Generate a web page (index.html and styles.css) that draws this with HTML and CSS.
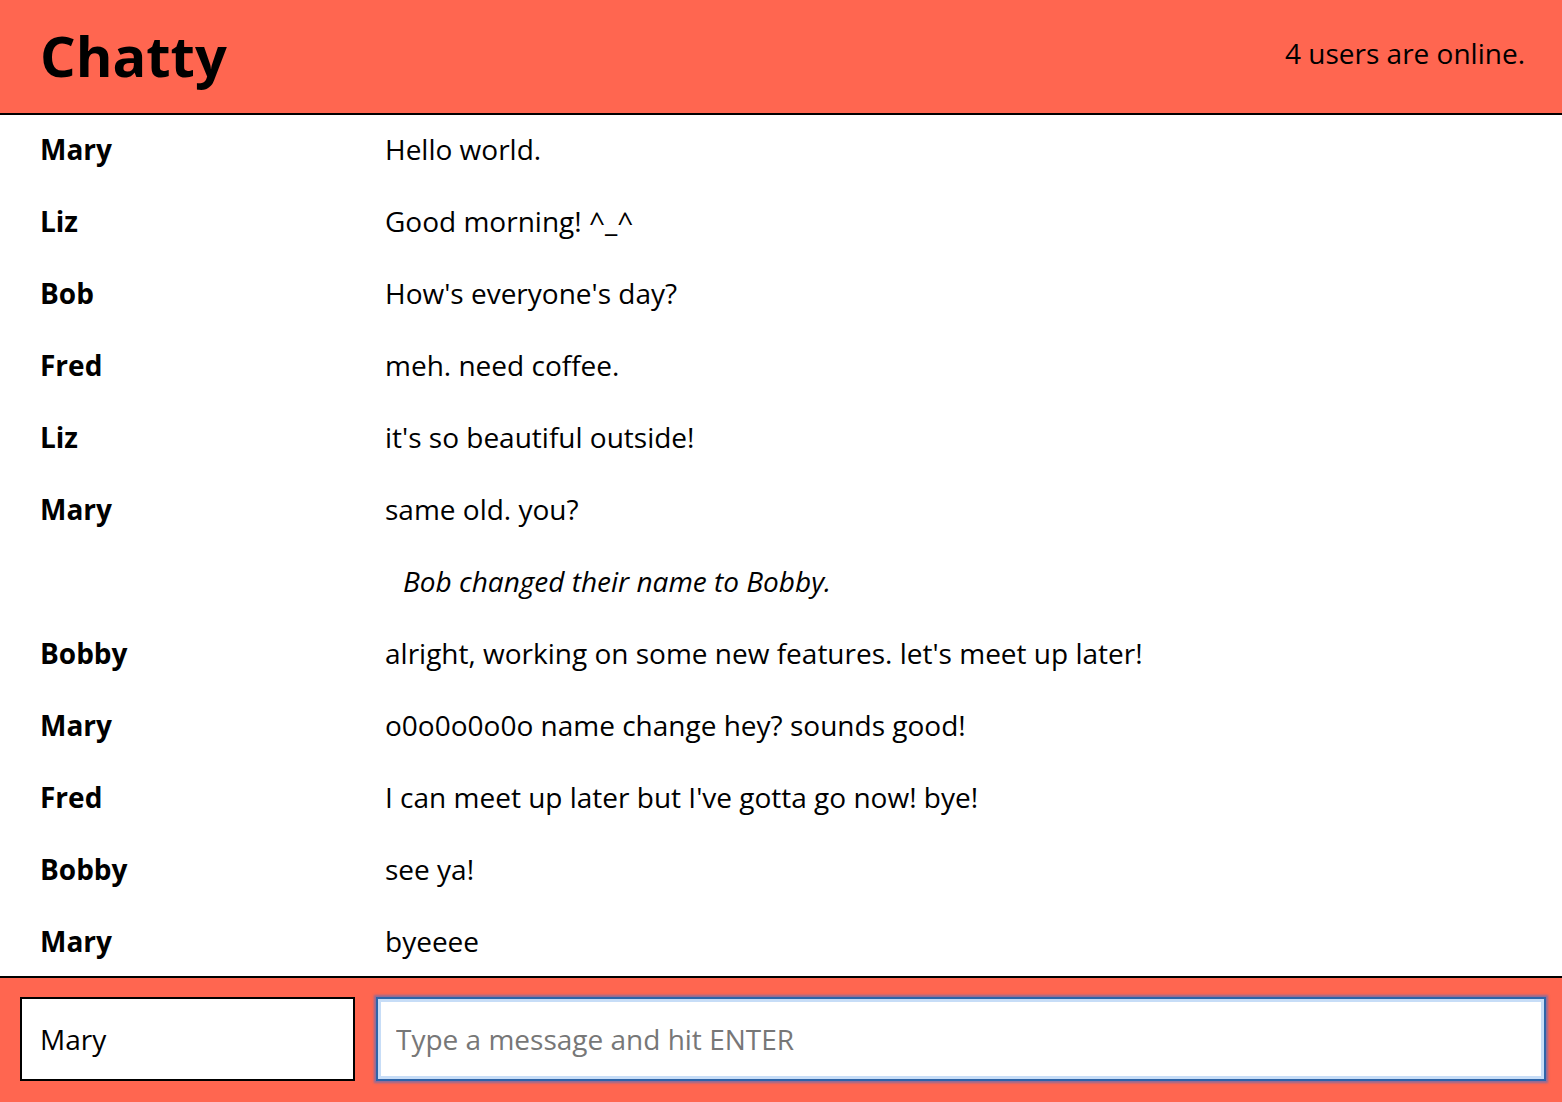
FILE: index.html
```html
<!DOCTYPE html>
<html>
<head>
<meta charset="utf-8">
<title>Chatty</title>
<link rel="stylesheet" href="styles.css">
</head>
<body>
<nav class="navbar">
  <a class="navbar-brand" href="#">Chatty</a>
  <span class="online-count">4 users are online.</span>
</nav>
<main class="messages">
  <div class="message"><span class="message-username">Mary</span><span class="message-content">Hello world.</span></div>
  <div class="message"><span class="message-username">Liz</span><span class="message-content">Good morning! ^_^</span></div>
  <div class="message"><span class="message-username">Bob</span><span class="message-content">How's everyone's day?</span></div>
  <div class="message"><span class="message-username">Fred</span><span class="message-content">meh. need coffee.</span></div>
  <div class="message"><span class="message-username">Liz</span><span class="message-content">it's so beautiful outside!</span></div>
  <div class="message"><span class="message-username">Mary</span><span class="message-content">same old. you?</span></div>
  <div class="message system"><span class="message-username"></span><span class="message-content">Bob changed their name to Bobby.</span></div>
  <div class="message"><span class="message-username">Bobby</span><span class="message-content">alright, working on some new features. let's meet up later!</span></div>
  <div class="message"><span class="message-username">Mary</span><span class="message-content">o0o0o0o0o name change hey? sounds good!</span></div>
  <div class="message"><span class="message-username">Fred</span><span class="message-content">I can meet up later but I've gotta go now! bye!</span></div>
  <div class="message"><span class="message-username">Bobby</span><span class="message-content">see ya!</span></div>
  <div class="message"><span class="message-username">Mary</span><span class="message-content">byeeee</span></div>
</main>
<footer class="chatbar">
  <input class="chatbar-username" value="Mary">
  <input class="chatbar-message focused" placeholder="Type a message and hit ENTER">
</footer>
</body>
</html>
```
FILE: styles.css
```css
* { box-sizing: border-box; }
html, body { height: 100%; }
body {
  margin: 0;
  font-family: "Open Sans", "DejaVu Sans", sans-serif;
  color: #000;
  background: #fff;
  display: flex;
  flex-direction: column;
  overflow: hidden;
}
.navbar {
  flex: 0 0 115px;
  background: #ff6650;
  border-bottom: 2px solid #000;
  display: flex;
  align-items: center;
  justify-content: space-between;
  padding: 0 37px 0 40px;
}
.navbar-brand {
  font-size: 56px;
  font-weight: 700;
  color: #000;
  text-decoration: none;
  line-height: 1;
  margin-bottom: 4px;
}
.online-count {
  font-size: 28px;
  line-height: 1;
  margin-bottom: 8px;
}
.messages {
  flex: 1 1 auto;
  overflow: hidden;
  margin-top: -2px;
}
.message {
  display: flex;
  height: 72px;
  align-items: center;
  padding-left: 40px;
  font-size: 28px;
}
.message-username {
  flex: 0 0 345px;
  font-weight: 700;
}
.message.system .message-content {
  font-style: italic;
  padding-left: 18px;
}
.chatbar {
  flex: 0 0 126px;
  background: #ff6650;
  border-top: 2px solid #000;
  display: flex;
  align-items: center;
  gap: 21px;
  padding: 0 16px 2px 20px;
}
.chatbar input {
  height: 84px;
  min-width: 0;
  font-family: "Open Sans", "DejaVu Sans", sans-serif;
  font-size: 28px;
  color: #000;
  background: #fff;
  outline: none;
}
.chatbar-username {
  flex: 0 0 335px;
  width: 335px;
  border: 2px solid #000;
  padding: 0 18px;
}
.chatbar-message {
  flex: 1 1 auto;
  width: 100%;
  border: 2px solid #2e64a8;
  padding: 0 18px;
  box-shadow: inset 0 0 0 3px #c7ddf7, 0 0 2px 2px rgba(70, 110, 200, 0.6);
}
.chatbar-message::placeholder {
  color: #777;
}
```
